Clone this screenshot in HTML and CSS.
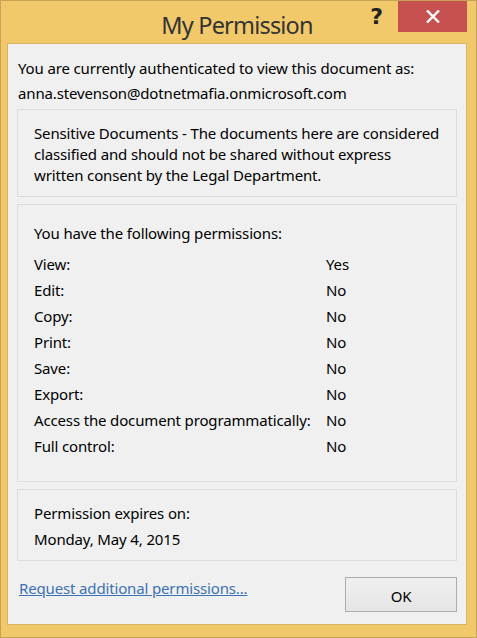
FILE: index.html
```html
<!DOCTYPE html>
<html>
<head>
<meta charset="utf-8">
<link rel="stylesheet" href="styles.css">
</head>
<body>
<div class="window">
  <div class="titlebar">
    <div></div>
    <div class="title">My Permission</div>
    <div class="controls">
      <span class="help">?</span>
      <div class="close">
        <svg width="14" height="13" viewBox="0 0 14 13"><path d="M1 0.5 L13 12.5 M13 0.5 L1 12.5" stroke="#fff" stroke-width="2.4" fill="none"/></svg>
      </div>
    </div>
  </div>
  <div class="content">
    <div class="intro">
      <div class="line25">You are currently authenticated to view this document as:</div>
      <div class="line25">anna.stevenson@dotnetmafia.onmicrosoft.com</div>
    </div>
    <div class="box box-desc">Sensitive Documents - The documents here are considered classified and should not be shared without express written consent by the Legal Department.</div>
    <div class="box box-perms">
      <div class="heading">You have the following permissions:</div>
      <div class="perm-grid">
        <span>View:</span><span>Yes</span>
        <span>Edit:</span><span>No</span>
        <span>Copy:</span><span>No</span>
        <span>Print:</span><span>No</span>
        <span>Save:</span><span>No</span>
        <span>Export:</span><span>No</span>
        <span>Access the document programmatically:</span><span>No</span>
        <span>Full control:</span><span>No</span>
      </div>
    </div>
    <div class="box box-expiry">
      <div>Permission expires on:</div>
      <div>Monday, May 4, 2015</div>
    </div>
    <div class="footer">
      <a class="link" href="#">Request additional permissions...</a>
      <button class="ok">OK</button>
    </div>
  </div>
</div>
</body>
</html>
```
FILE: styles.css
```css
html, body {
  margin: 0;
  padding: 0;
}
body {
  width: 477px;
  height: 638px;
  overflow: hidden;
  font-family: "Noto Sans", "Open Sans", sans-serif;
  font-size: 15px;
  letter-spacing: -0.15px;
  color: #000;
}
.window {
  box-sizing: border-box;
  width: 477px;
  height: 638px;
  background: #f1c96b;
  border: 1px solid #c6a358;
  padding: 0 9px 12px 6px;
  display: flex;
  flex-direction: column;
}
.titlebar {
  height: 42px;
  display: grid;
  grid-template-columns: 1fr auto 1fr;
  flex: none;
}
.title {
  font-size: 23.5px;
  letter-spacing: -0.8px;
  color: #333;
  line-height: 24px;
  padding-top: 12px;
}
.controls {
  display: flex;
  justify-content: flex-end;
  align-items: flex-start;
}
.help {
  font-family: "DejaVu Sans", sans-serif;
  font-weight: bold;
  font-size: 22px;
  line-height: 22px;
  letter-spacing: 0;
  color: #222;
  margin-top: 5px;
  margin-right: 15px;
}
.close {
  width: 69px;
  height: 31px;
  background: #c75050;
  display: flex;
  align-items: center;
  justify-content: center;
}
.content {
  flex: 1;
  background: #f0f0f0;
  border: 1px solid #d7b463;
  display: flex;
  flex-direction: column;
  padding: 12px 9px 12px 9px;
  gap: 7px;
}
.intro {
  padding-left: 1px;
  margin-bottom: -4px;
}
.line25 {
  line-height: 25px;
}
.box {
  border: 1px solid #dcdcdc;
  padding-left: 16px;
}
.box-desc {
  line-height: 21px;
  padding-top: 13px;
  padding-bottom: 10px;
  padding-right: 14px;
}
.box-perms {
  line-height: 26px;
  padding-top: 15px;
  padding-bottom: 22px;
}
.heading {
  margin-bottom: 5px;
}
.perm-grid {
  display: grid;
  grid-template-columns: 292px auto;
}
.box-expiry {
  line-height: 26px;
  padding-top: 10px;
  padding-bottom: 8px;
}
.footer {
  flex: 1;
  display: flex;
  justify-content: space-between;
  align-items: flex-end;
  padding-left: 2px;
}
.link {
  color: #3a72b4;
  text-decoration: underline;
  line-height: 20px;
  align-self: flex-start;
  margin-top: 10px;
}
.ok {
  width: 112px;
  height: 35px;
  border: 1px solid #adadad;
  background: linear-gradient(#f0f0f0, #e5e5e5);
  font-family: "Noto Sans", "Open Sans", sans-serif;
  font-size: 15px;
  letter-spacing: -0.15px;
  color: #000;
  padding: 0;
  padding-top: 2px;
}
```
